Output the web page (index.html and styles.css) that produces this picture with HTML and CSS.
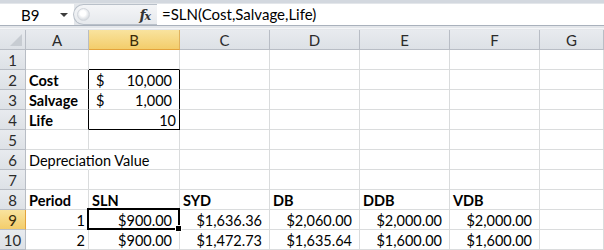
FILE: index.html
```html
<!DOCTYPE html>
<html>
<head>
<meta charset="utf-8">
<link rel="stylesheet" href="styles.css">
</head>
<body>
<div class="app">
  <div class="fbar">
    <div class="namebox"><span class="nb-text">B9</span><span class="dd"></span></div>
    <div class="sep"><span class="grip"></span><span class="fx">f<span class="x">x</span></span></div>
    <div class="formula">=SLN(Cost,Salvage,Life)</div>
  </div>
  <div class="sheet">
    <div class="corner"></div>
    <div class="ch">A</div><div class="ch sel">B</div><div class="ch">C</div><div class="ch">D</div><div class="ch">E</div><div class="ch">F</div><div class="ch">G</div>

    <div class="rh">1</div>
    <div class="c"></div><div class="c boxb"></div><div class="c"></div><div class="c"></div><div class="c"></div><div class="c"></div><div class="c"></div>

    <div class="rh">2</div>
    <div class="c b boxl">Cost</div><div class="c acc boxr"><span>$</span><span>10,000</span></div><div class="c"></div><div class="c"></div><div class="c"></div><div class="c"></div><div class="c"></div>

    <div class="rh">3</div>
    <div class="c b boxl">Salvage</div><div class="c acc boxr"><span>$</span><span>1,000</span></div><div class="c"></div><div class="c"></div><div class="c"></div><div class="c"></div><div class="c"></div>

    <div class="rh">4</div>
    <div class="c b boxl">Life</div><div class="c r boxr boxb">10</div><div class="c"></div><div class="c"></div><div class="c"></div><div class="c"></div><div class="c"></div>

    <div class="rh">5</div>
    <div class="c"></div><div class="c"></div><div class="c"></div><div class="c"></div><div class="c"></div><div class="c"></div><div class="c"></div>

    <div class="rh">6</div>
    <div class="c over">Depreciation Value</div><div class="c"></div><div class="c"></div><div class="c"></div><div class="c"></div><div class="c"></div><div class="c"></div>

    <div class="rh">7</div>
    <div class="c"></div><div class="c"></div><div class="c"></div><div class="c"></div><div class="c"></div><div class="c"></div><div class="c"></div>

    <div class="rh">8</div>
    <div class="c b">Period</div><div class="c b">SLN</div><div class="c b">SYD</div><div class="c b">DB</div><div class="c b">DDB</div><div class="c b">VDB</div><div class="c"></div>

    <div class="rh sel">9</div>
    <div class="c r">1</div><div class="c cur-fmt cur">$900.00</div><div class="c cur-fmt">$1,636.36</div><div class="c cur-fmt">$2,060.00</div><div class="c cur-fmt">$2,000.00</div><div class="c cur-fmt">$2,000.00</div><div class="c"></div>

    <div class="rh">10</div>
    <div class="c r">2</div><div class="c cur-fmt">$900.00</div><div class="c cur-fmt">$1,472.73</div><div class="c cur-fmt">$1,635.64</div><div class="c cur-fmt">$1,600.00</div><div class="c cur-fmt">$1,600.00</div><div class="c"></div>
  </div>
</div>
</body>
</html>
```
FILE: styles.css
```css
* { box-sizing: border-box; }
html, body { margin: 0; padding: 0; background: #fff; }
.app {
  width: 604px;
  height: 250px;
  overflow: hidden;
  font-family: Lato, "Open Sans", sans-serif;
  font-size: 14.5px;
  color: #000;
  background: #dfe3e8;
}
.fbar {
  height: 30px;
  display: flex;
  padding-top: 4px;
  background: linear-gradient(#d3d8df 0 3px, #e3e6ea 3px);
  position: relative;
}
.fbar::after {
  content: "";
  position: absolute;
  left: 0; right: 0; top: 25px;
  height: 2px;
  border-top: 1px solid #a9b1bc;
  border-bottom: 1px solid #f4f5f7;
}
.namebox {
  width: 74px;
  height: 21px;
  background: #fff;
  display: flex;
  align-items: center;
  position: relative;
}
.nb-text {
  font-size: 15px;
  margin-left: 21px;
}
.dd {
  position: absolute;
  left: 60px;
  top: 9px;
  width: 0; height: 0;
  border-left: 4px solid transparent;
  border-right: 4px solid transparent;
  border-top: 4px solid #3c3c3c;
}
.sep {
  width: 84px;
  height: 21px;
  background: linear-gradient(#f4f5f7, #e6e9ed);
  border-radius: 11px 0 0 11px;
  border: 1px solid #b9c0c9;
  border-right: 0;
  margin-left: -1px;
  display: flex;
  align-items: center;
  position: relative;
}
.grip {
  width: 13px; height: 13px;
  border-radius: 50%;
  margin-left: 3px;
  background: radial-gradient(circle at 45% 40%, #ffffff 0 30%, #d9dde2 70%, #c7ccd3 100%);
  border: 1px solid #d2d6dc;
}
.fx {
  margin-left: auto;
  margin-right: 7px;
  font-family: "DejaVu Serif", "Liberation Serif", serif;
  font-style: italic;
  font-weight: bold;
  font-size: 14px;
  color: #333;
  letter-spacing: -1px;
}
.fx .x { font-size: 11px; }
.formula {
  flex: 1;
  height: 21px;
  background: #fff;
  padding-left: 5px;
  font-size: 15px;
  line-height: 20px;
}
.sheet {
  display: grid;
  grid-template-columns: 26px 63px 91px 90px 90px 90px 90px 64px;
  grid-auto-rows: 20px;
  background: #fff;
}
.corner, .ch, .rh {
  background: linear-gradient(#e8ebef, #dde1e6);
  color: #2b2b2b;
  border-right: 1px solid #b8bdc5;
  border-bottom: 1px solid #b8bdc5;
  display: flex;
  align-items: center;
  justify-content: center;
  font-size: 15px;
}
.corner { position: relative; }
.corner::after {
  content: "";
  position: absolute;
  right: 3px; bottom: 3px;
  width: 0; height: 0;
  border-left: 12px solid transparent;
  border-bottom: 12px solid #c7ccd2;
}
.ch.sel {
  background: linear-gradient(#f9e39e, #f3cd6b);
  border-bottom: 1px solid #e3a33c;
  border-right: 1px solid #e0b25e;
  color: #3a2a08;
}
.rh.sel {
  background: linear-gradient(#f9e39e, #f3cd6b);
  border-right: 1px solid #e3a33c;
  color: #3a2a08;
}
.c {
  border-right: 1px solid #dadcdd;
  border-bottom: 1px solid #dadcdd;
  padding: 1px 3px 0;
  line-height: 19px;
  white-space: nowrap;
}
.b { font-weight: bold; }
.r { text-align: right; }
.cur-fmt { text-align: right; padding-right: 7px; }
.acc {
  display: flex;
  justify-content: space-between;
  padding: 1px 7px 0 7px;
}
.over { overflow: visible; border-right-color: #fff; }
.boxl { border-right-color: #000; }
.boxr { border-right-color: #000; }
.boxb { border-bottom-color: #000; }
.cur { position: relative; }
.cur::before {
  content: "";
  position: absolute;
  left: -2px; top: -2px; right: -1px; bottom: -1px;
  border: 2px solid #000;
  pointer-events: none;
}
.cur::after {
  content: "";
  position: absolute;
  right: -3px; bottom: -3px;
  width: 5px; height: 5px;
  background: #000;
  border: 1px solid #fff;
}
```
